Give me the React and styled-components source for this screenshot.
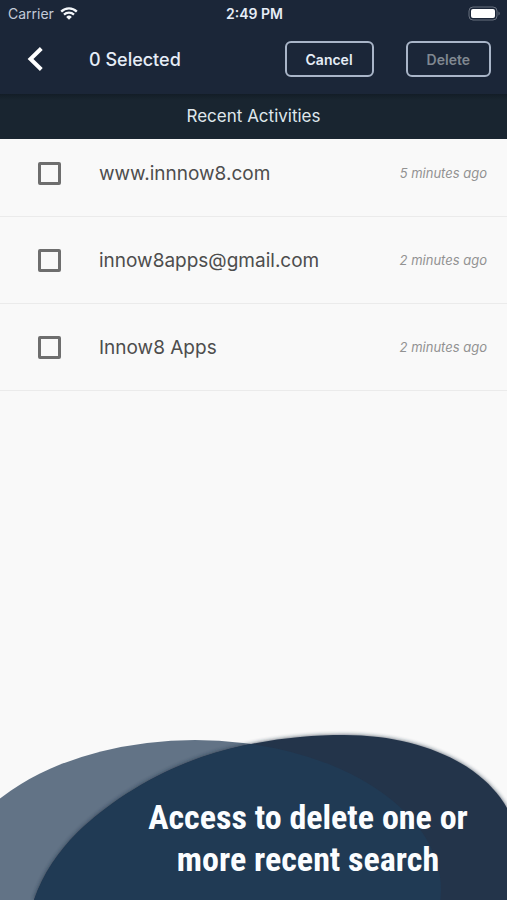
import React, { useState } from "react";
import styled, { createGlobalStyle } from "styled-components";

const GlobalStyle = createGlobalStyle`
  * {
    box-sizing: border-box;
  }
  body {
    margin: 0;
    background: #f9f9f9;
    font-family: Inter, "Liberation Sans", sans-serif;
  }
`;

const Container = styled.div`
  display: flex;
  flex-direction: column;
  min-height: 100vh;
`;

const Header = styled.header`
  background: #1b2638;
  color: #e6edf7;
`;

const StatusBar = styled.div`
  display: grid;
  grid-template-columns: 1fr auto 1fr;
  align-items: center;
  height: 26px;
  padding: 0 6px 0 8px;
  font-size: 14px;
`;

const Carrier = styled.div`
  display: flex;
  align-items: center;
  gap: 6px;
  color: #c3cbd8;
`;

const Time = styled.span`
  font-weight: 600;
`;

const Battery = styled.svg`
  justify-self: end;
`;

const Toolbar = styled.div`
  display: flex;
  align-items: center;
  height: 68px;
  padding: 0 16px 2px 24px;
`;

const BackButton = styled.button`
  display: flex;
  padding: 0;
  border: none;
  background: none;
  cursor: pointer;
`;

const Selected = styled.h1`
  flex: 1;
  margin: 0 0 0 41px;
  font-size: 18px;
  font-weight: 500;
`;

const Actions = styled.div`
  display: flex;
  gap: 32px;
`;

const ActionButton = styled.button`
  height: 36px;
  padding: 0 19px;
  border: 2px solid #a9b5c8;
  border-radius: 6px;
  background: none;
  color: #e6edf7;
  font-family: inherit;
  font-size: 14px;
  font-weight: 600;
  cursor: pointer;

  &:disabled {
    color: #808891;
    cursor: default;
  }
`;

const SectionTitle = styled.h2`
  position: relative;
  z-index: 1;
  margin: 0;
  background: linear-gradient(#131d27, #192530 6px);
  color: #dfe7ec;
  font-size: 17px;
  font-weight: 400;
  line-height: 45px;
  text-align: center;
`;

/* the list is scrolled a little way under the section title */
const List = styled.ul`
  margin: -9px 0 0;
  padding: 0;
  list-style: none;
`;

const Item = styled.li`
  display: flex;
  align-items: center;
  height: 87px;
  padding: 0 20px 0 38px;
  border-bottom: 1px solid #ebebeb;
`;

const Checkbox = styled.input`
  appearance: none;
  width: 23px;
  height: 23px;
  margin: 0;
  border: 3px solid #6e6e6e;
  border-radius: 2px;
  cursor: pointer;

  &:checked {
    background: #6e6e6e;
  }
`;

const Label = styled.label`
  flex: 1;
  margin-left: 38px;
  color: #4d4d4d;
  font-size: 19px;
`;

const Ago = styled.time`
  color: #929292;
  font-size: 13px;
  font-style: italic;
`;

const Banner = styled.footer`
  position: relative;
  display: flex;
  flex-direction: column;
  justify-content: flex-end;
  min-height: 180px;
  margin-top: auto;
  padding: 0 0 20px 109px;
`;

const Waves = styled.svg`
  position: absolute;
  left: 0;
  bottom: 0;
  width: 100%;
  height: 100%;
`;

const Caption = styled.p`
  position: relative;
  margin: 0;
  color: #fbfdff;
  font-family: "Roboto Condensed", "Liberation Sans Narrow", Roboto, sans-serif;
  font-size: 34px;
  font-weight: 700;
  line-height: 42px;
  text-align: center;
`;

const activities = [
  { id: 1, name: "www.innnow8.com", ago: "5 minutes ago" },
  { id: 2, name: "innow8apps@gmail.com", ago: "2 minutes ago" },
  { id: 3, name: "Innow8 Apps", ago: "2 minutes ago" },
];

const frontWave =
  "M34 180C43 154 58 132 78 112C108 83 151 55 202 37C250 21 300 15 344 15C397 15 442 29 473 51C488 62 499 74 507 88V180Z";

const App = () => {
  const [selected, setSelected] = useState([]);

  const toggle = (id) => {
    setSelected(
      selected.includes(id)
        ? selected.filter((item) => item !== id)
        : [...selected, id]
    );
  };

  return (
    <Container>
      <GlobalStyle />
      <Header>
        <StatusBar>
          <Carrier>
            Carrier
            <svg width="18" height="13" viewBox="0 0 18 13" fill="none">
              <path d="M1.2 4.6a11 11 0 0 1 15.6 0" stroke="#f4f7fb" strokeWidth="2.3" />
              <path d="M4 7.6a7.1 7.1 0 0 1 10 0" stroke="#f4f7fb" strokeWidth="2.2" />
              <path d="M6.2 9.9a4 4 0 0 1 5.6 0L9 12.7z" fill="#f4f7fb" />
            </svg>
          </Carrier>
          <Time>2:49 PM</Time>
          <Battery width="33" height="15" viewBox="0 0 33 15">
            <rect x="1" y="1" width="28" height="13" rx="4" fill="none" stroke="#69717f" />
            <rect x="3" y="3" width="24" height="9" rx="2" fill="#fff" />
            <path d="M30.5 5.5c1.6.5 1.6 3.5 0 4z" fill="#69717f" />
          </Battery>
        </StatusBar>
        <Toolbar>
          <BackButton aria-label="Back">
            <svg width="24" height="26" viewBox="0 0 24 26" fill="none">
              <path d="M17.3 2.5L6.5 13l10.8 10.5" stroke="#fff" strokeWidth="4" />
            </svg>
          </BackButton>
          <Selected>{selected.length} Selected</Selected>
          <Actions>
            <ActionButton onClick={() => setSelected([])}>Cancel</ActionButton>
            <ActionButton disabled={selected.length === 0}>Delete</ActionButton>
          </Actions>
        </Toolbar>
      </Header>
      <SectionTitle>Recent Activities</SectionTitle>
      <List>
        {activities.map((item) => (
          <Item key={item.id}>
            <Checkbox
              type="checkbox"
              id={`activity-${item.id}`}
              checked={selected.includes(item.id)}
              onChange={() => toggle(item.id)}
            />
            <Label htmlFor={`activity-${item.id}`}>{item.name}</Label>
            <Ago>{item.ago}</Ago>
          </Item>
        ))}
      </List>
      <Banner>
        <Waves viewBox="0 0 507 180" preserveAspectRatio="none" aria-hidden="true">
          <defs>
            <clipPath id="front">
              <path d={frontWave} />
            </clipPath>
            <filter id="shade" x="-5%" y="-10%" width="110%" height="120%">
              <feGaussianBlur stdDeviation="2" />
            </filter>
          </defs>
          <ellipse cx="195" cy="170" rx="246" ry="150" fill="#627386" />
          <path d={frontWave} fill="#1c2a3c" opacity="0.8" filter="url(#shade)" />
          <path d={frontWave} fill="#23344a" />
          <ellipse cx="195" cy="170" rx="246" ry="150" fill="#203a54" clipPath="url(#front)" />
        </Waves>
        <Caption>
          Access to delete one or
          <br />
          more recent search
        </Caption>
      </Banner>
    </Container>
  );
};

export default App;
